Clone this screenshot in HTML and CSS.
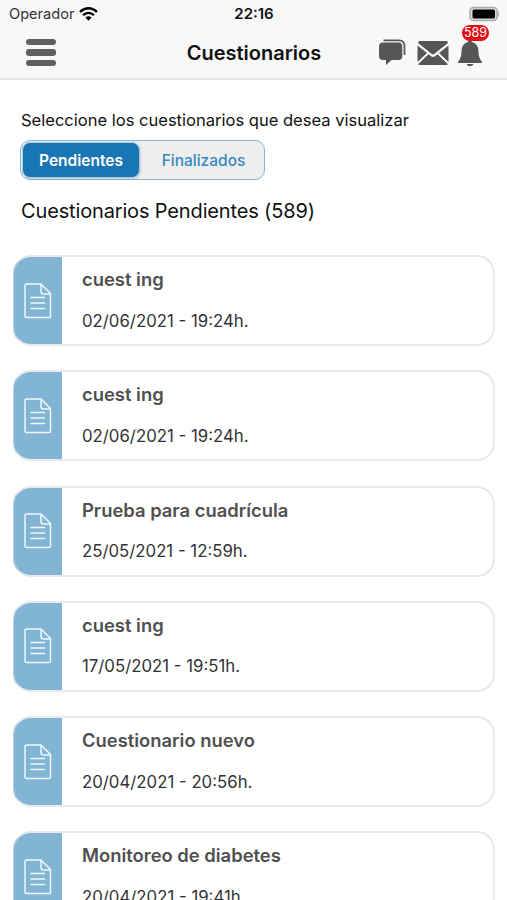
FILE: index.html
```html
<!DOCTYPE html>
<html lang="es">
<head>
<meta charset="utf-8">
<title>Cuestionarios</title>
<link rel="stylesheet" href="styles.css">
</head>
<body>
<svg width="0" height="0" class="defs" aria-hidden="true">
  <symbol id="doc" viewBox="0 0 28 36" fill="none" stroke="#edf7fc" stroke-width="1.5" stroke-linejoin="round" stroke-linecap="round">
    <path d="M3 1H17L26.500 10.500V33Q26.500 34.500 25 34.500H2.500Q1 34.500 1 33V2.500Q1 1 3 1ZM17 1V8.500Q17 11 19.500 11H26.500M7 14.500H20.500M7 20H20.500M7 25.500H20.500"/>
  </symbol>
</svg>
<header class="top">
  <div class="status">
    <div class="carrier"><span>Operador</span>
      <svg width="19" height="14" viewBox="0 0 19 14"><g fill="none" stroke="#000" stroke-width="2.300"><path d="M.9 4.900Q9.500-2.300 18.100 4.900"/><path d="M4 8.200Q9.500 3.500 15 8.200"/></g><path d="M6.400 10.600Q9.500 8 12.600 10.600L9.500 13.700Z"/></svg>
    </div>
    <div class="clock">22:16</div>
    <svg class="battery" width="32" height="16" viewBox="0 0 32 16"><path d="M29 5Q31.500 8 29 11Z" fill="#aaa"/><rect x="1" y="1.500" width="27" height="13" rx="3.500" fill="#ddd" stroke="#aaa" stroke-width="1.500"/><rect x="3.500" y="3.500" width="22.500" height="9" rx="1.500"/></svg>
  </div>
  <div class="bar">
    <div class="menu"><i></i><i></i><i></i></div>
    <h1>Cuestionarios</h1>
    <div class="actions">
      <svg width="27" height="27" viewBox="0 0 27 27"><path d="M4.500 1.300H20Q25.500 1.300 25.500 7V16" fill="none" stroke="#565656" stroke-width="1.800"/><path d="M4 3.500H19.500Q23.300 3.500 23.300 7.500V17Q23.300 21 19.500 21H12.500L7 26V21H4Q0 21 0 17V7.500Q0 3.500 4 3.500Z" fill="#565656"/></svg>
      <svg width="32" height="26" viewBox="0 0 32 26"><g fill="#565656"><path d="M3 1H29Q31 1 31 3L17.500 13.800Q16 15 14.500 13.800L1 3Q1 1 3 1Z"/><path d="M.5 5.500L10 13L.5 22Z"/><path d="M31.500 5.500L22 13L31.500 22Z"/><path d="M1 24.200L11.500 14.300L14 16.300Q16 17.800 18 16.300L20.500 14.300L31 24.200Q30.500 25 29 25H3Q1.500 25 1 24.200Z"/></g></svg>
      <div class="bell">
        <svg width="26" height="28" viewBox="0 0 26 28" fill="#565656"><path d="M11 3Q11 1 13 1T15 3Q21.500 4.500 21.500 12.500Q21.500 19 25 23V24H1V23Q4.500 19 4.500 12.500Q4.500 4.500 11 3Z"/><path d="M9.500 25H16.500Q15.500 27.300 13 27.300T9.500 25Z"/></svg>
        <span class="badge">589</span>
      </div>
    </div>
  </div>
</header>
<main>
  <p class="hint">Seleccione los cuestionarios que desea visualizar</p>
  <div class="tabs"><div class="tab on"><span>Pendientes</span></div><div class="tab"><span>Finalizados</span></div></div>
  <h2>Cuestionarios Pendientes (589)</h2>
  <section class="list">
    <article class="card"><div class="side"><svg width="28" height="36"><use href="#doc"/></svg></div><div class="info"><h3>cuest ing</h3><p>02/06/2021 - 19:24h.</p></div></article>
    <article class="card"><div class="side"><svg width="28" height="36"><use href="#doc"/></svg></div><div class="info"><h3>cuest ing</h3><p>02/06/2021 - 19:24h.</p></div></article>
    <article class="card"><div class="side"><svg width="28" height="36"><use href="#doc"/></svg></div><div class="info"><h3>Prueba para cuadrícula</h3><p>25/05/2021 - 12:59h.</p></div></article>
    <article class="card"><div class="side"><svg width="28" height="36"><use href="#doc"/></svg></div><div class="info"><h3>cuest ing</h3><p>17/05/2021 - 19:51h.</p></div></article>
    <article class="card"><div class="side"><svg width="28" height="36"><use href="#doc"/></svg></div><div class="info"><h3>Cuestionario nuevo</h3><p>20/04/2021 - 20:56h.</p></div></article>
    <article class="card"><div class="side"><svg width="28" height="36"><use href="#doc"/></svg></div><div class="info"><h3>Monitoreo de diabetes</h3><p>20/04/2021 - 19:41h.</p></div></article>
  </section>
</main>
</body>
</html>
```
FILE: styles.css
```css
* { box-sizing: border-box; margin: 0; padding: 0; }
html { height: 900px; overflow: hidden; }
body { height: 900px; overflow: hidden; background: #fff; font-family: Inter, "Liberation Sans", sans-serif; color: #111; }
svg { display: block; flex: none; }
.defs { position: absolute; }
.top { height: 80px; background: #f8f8f8; border-bottom: 2px solid #e8e8e8; }
.status { height: 27px; display: grid; grid-template-columns: 1fr auto 1fr; align-items: center; padding: 0 7px 0 8px; }
.carrier { display: flex; align-items: center; gap: 5px; padding-left: 1px; font-size: 14.6px; color: #333; }
.clock { font-size: 15px; font-weight: 600; }
.battery { justify-self: end; margin-right: -1px; }
.bar { height: 51px; display: grid; grid-template-columns: 1fr auto 1fr; align-items: center; padding: 0 25px 0 26px; }
.menu { width: 30px; display: flex; flex-direction: column; gap: 4.5px; }
.menu i { height: 6.2px; border-radius: 3px; background: #606060; }
h1 { font-size: 20px; line-height: 26px; font-weight: 600; }
.actions { justify-self: end; display: flex; align-items: center; gap: 11px; margin-right: -1px; }
.bell { position: relative; margin-left: -3px; }
.badge { position: absolute; left: 5px; top: -14px; width: 27px; height: 16px; border-radius: 8px; background: #e60d12; color: #fff; font-size: 12.5px; line-height: 16px; text-align: center; }
main { padding: 30px 13px 0; }
.hint { margin-left: 8px; font-size: 16.55px; line-height: 20px; }
.tabs { display: flex; width: 245px; height: 40px; margin: 10px 0 0 7px; padding: 1px; border: 1px solid #82b5da; border-radius: 10px; background: #eee; }
.tab { flex: 1; display: flex; align-items: center; justify-content: center; padding-left: 4px; font-size: 15.5px; font-weight: 500; color: #3988c0; }
.tab.on { flex: none; width: 118px; padding: 0; border: 1px solid #a5cbe5; border-radius: 8px; background: #1976b5; color: #fff; font-weight: 600; box-shadow: 1px 1px 2px #0002; }
h2 { margin: 18px 0 0 8px; font-size: 20px; line-height: 26px; font-weight: 400; letter-spacing: -.15px; }
.list { display: grid; gap: 24.250px; margin-top: 31px; }
.card { height: 91px; width: 482px; display: flex; border: 2px solid #e7e9ea; border-left: 1px solid #b5d1e2; border-radius: 18px; overflow: hidden; background: #fff; }
.side { width: 48px; display: flex; align-items: center; justify-content: center; background: #82b4d3; }
.info { padding: 11px 0 0 20px; color: #333; }
h3 { font-size: 18.4px; line-height: 22px; font-weight: 600; color: #505050; }
.info p { margin-top: 20.500px; font-size: 16.800px; line-height: 21px; }
```
